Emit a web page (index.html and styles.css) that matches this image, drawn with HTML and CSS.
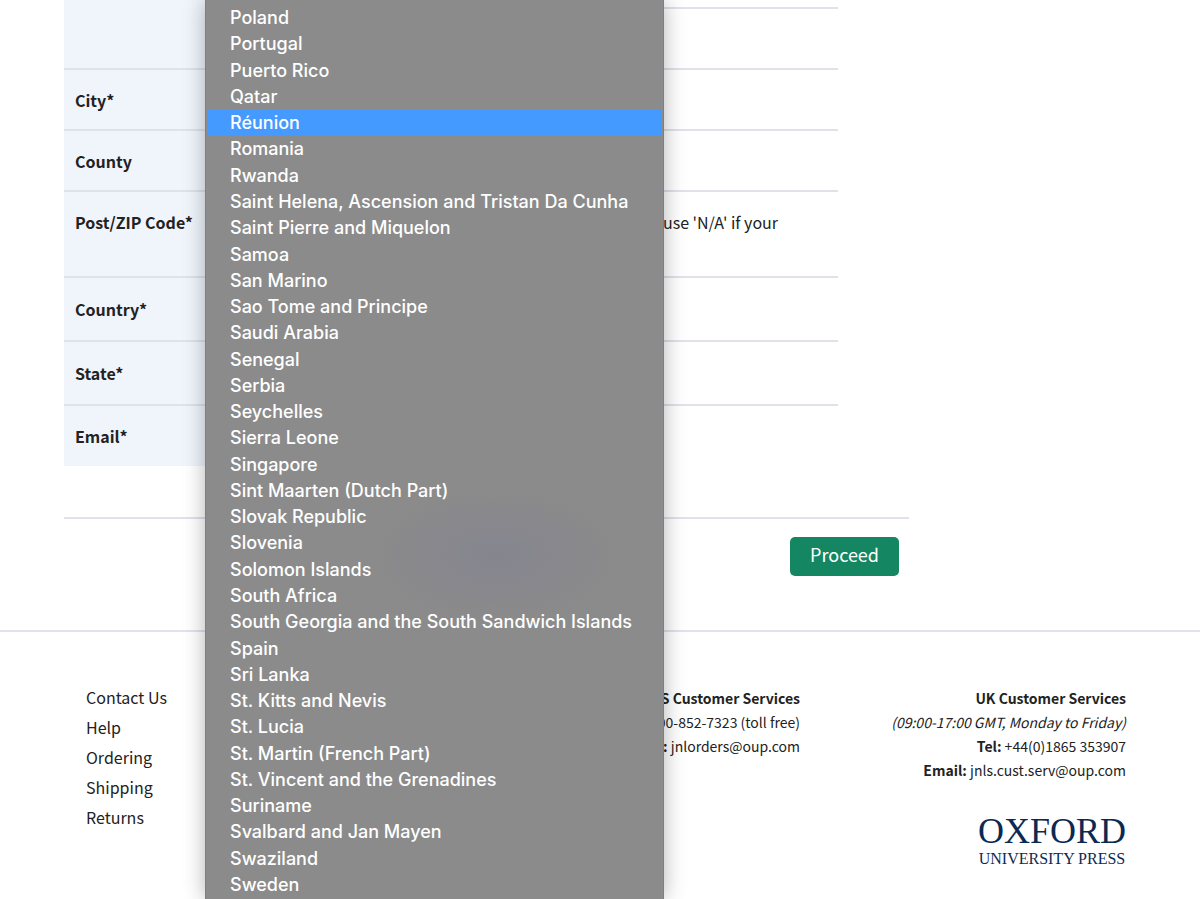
FILE: index.html
```
<!DOCTYPE html>
<html lang="en">
<head>
    <meta charset="UTF-8">
    <meta name="viewport" content="width=device-width, initial-scale=1.0">
    <title>Your details - Oxford University Press</title>
    <link rel="stylesheet" href="styles.css">
</head>
<body>
    <main>
        <form class="order-form">
            <table class="details">
                <tr class="row-first">
                    <th rowspan="2"></th>
                    <td></td>
                </tr>
                <tr>
                    <td><input type="text" aria-label="Address line 2"></td>
                </tr>
                <tr>
                    <th><label for="city">City*</label></th>
                    <td><input type="text" id="city"></td>
                </tr>
                <tr>
                    <th><label for="county">County</label></th>
                    <td><input type="text" id="county"></td>
                </tr>
                <tr class="row-postcode">
                    <th><label for="postcode">Post/ZIP Code*</label></th>
                    <td>
                        <div class="with-note">
                            <input type="text" id="postcode">
                            <span>Please use 'N/A' if your</span>
                        </div>
                    </td>
                </tr>
                <tr class="row-select">
                    <th><label for="country">Country*</label></th>
                    <td>
                        <select id="country">
                            <option>Réunion</option>
                        </select>
                    </td>
                </tr>
                <tr class="row-select">
                    <th><label for="state">State*</label></th>
                    <td><select id="state"></select></td>
                </tr>
                <tr>
                    <th><label for="email">Email*</label></th>
                    <td><input type="email" id="email"></td>
                </tr>
            </table>
            <div class="actions">
                <button type="button">Proceed</button>
            </div>
        </form>
    </main>

    <footer>
        <nav class="footer-links">
            <a href="#">Contact Us</a>
            <a href="#">Help</a>
            <a href="#">Ordering</a>
            <a href="#">Shipping</a>
            <a href="#">Returns</a>
        </nav>
        <div class="support">
            <strong>US Customer Services</strong>
            <span><strong>Tel:</strong> 1-800-852-7323 (toll free)</span>
            <span><strong>Email:</strong> jnlorders@oup.com</span>
        </div>
        <div class="support support-uk">
            <strong>UK Customer Services</strong>
            <em>(09:00-17:00 GMT, Monday to Friday)</em>
            <span><strong>Tel:</strong> +44(0)1865 353907</span>
            <span><strong>Email:</strong> jnls.cust.serv@oup.com</span>
            <div class="logo">
                <span class="logo-name">OXFORD</span>
                <span class="logo-sub">UNIVERSITY PRESS</span>
            </div>
        </div>
    </footer>

    <!-- open country list -->
    <ul class="country-menu" role="listbox" aria-label="Country">
        <li role="option">Poland</li>
        <li role="option">Portugal</li>
        <li role="option">Puerto Rico</li>
        <li role="option">Qatar</li>
        <li role="option" class="active" aria-selected="true">Réunion</li>
        <li role="option">Romania</li>
        <li role="option">Rwanda</li>
        <li role="option">Saint Helena, Ascension and Tristan Da Cunha</li>
        <li role="option">Saint Pierre and Miquelon</li>
        <li role="option">Samoa</li>
        <li role="option">San Marino</li>
        <li role="option">Sao Tome and Principe</li>
        <li role="option">Saudi Arabia</li>
        <li role="option">Senegal</li>
        <li role="option">Serbia</li>
        <li role="option">Seychelles</li>
        <li role="option">Sierra Leone</li>
        <li role="option">Singapore</li>
        <li role="option">Sint Maarten (Dutch Part)</li>
        <li role="option">Slovak Republic</li>
        <li role="option">Slovenia</li>
        <li role="option">Solomon Islands</li>
        <li role="option">South Africa</li>
        <li role="option">South Georgia and the South Sandwich Islands</li>
        <li role="option">Spain</li>
        <li role="option">Sri Lanka</li>
        <li role="option">St. Kitts and Nevis</li>
        <li role="option">St. Lucia</li>
        <li role="option">St. Martin (French Part)</li>
        <li role="option">St. Vincent and the Grenadines</li>
        <li role="option">Suriname</li>
        <li role="option">Svalbard and Jan Mayen</li>
        <li role="option">Swaziland</li>
        <li role="option">Sweden</li>
    </ul>
</body>
</html>
```
FILE: styles.css
```
* {
    box-sizing: border-box;
}
body {
    font-family: "Noto Sans CJK SC", "Noto Sans", sans-serif;
    font-size: 16px;
    line-height: 24px;
    margin: 0;
    background-color: #fff;
    color: #222;
}
main {
    padding: 0 64px;
    border-bottom: 2px solid #e0e2ee;
}
.order-form {
    max-width: 845px;
}
.details {
    width: 100%;
    max-width: 774px;
    border-collapse: collapse;
}
.details th {
    width: 160px;
    padding: 0 11px;
    background-color: #f0f5fc;
    text-align: left;
}
.details td {
    padding: 0 11px;
}
.details tr {
    height: 61px;
    border-bottom: 2px solid #dfe1eb;
}
.details tr:last-child {
    border-bottom: none;
}
.details .row-first {
    height: 8px;
}
.details .row-postcode {
    height: 86px;
}
.details .row-postcode th,
.details .row-postcode td {
    padding-top: 18px;
    vertical-align: top;
}
.details .row-select {
    height: 64px;
}
.details input,
.details select {
    width: 300px;
    height: 30px;
    padding: 0 8px;
    border: 1px solid #b4b8c8;
    border-radius: 4px;
    background-color: #fff;
    font: inherit;
}
.with-note {
    display: flex;
    justify-content: flex-end;
    gap: 8px;
    padding-right: 49px;
}
.actions {
    display: flex;
    justify-content: flex-end;
    margin-top: 51px;
    padding: 18px 10px 54px;
    border-top: 2px solid #dfe1eb;
}
.actions button {
    height: 39px;
    padding: 0 20px 5px;
    border: none;
    border-radius: 5px;
    background-color: #148762;
    color: #fff;
    font-family: inherit;
    font-size: 18px;
    cursor: pointer;
}
footer {
    display: flex;
    padding: 50px 74px 32px 86px;
}
.footer-links {
    display: flex;
    flex-direction: column;
    flex: 1;
    line-height: 30px;
}
.footer-links a {
    color: #222;
    text-decoration: none;
}
.support {
    display: flex;
    flex-direction: column;
    align-items: flex-end;
    padding-top: 4px;
    font-size: 14px;
    text-align: right;
}
.support-uk {
    width: 326px;
}
.logo {
    display: flex;
    flex-direction: column;
    align-items: center;
    margin-top: 30px;
    color: #0b2a52;
    font-family: "Liberation Serif", serif;
}
.logo-name {
    font-size: 36px;
    line-height: 38px;
}
.logo-sub {
    font-size: 16px;
    line-height: 18px;
}
.country-menu {
    position: absolute;
    top: 0;
    bottom: 0;
    left: 205px;
    display: flex;
    flex-direction: column;
    width: 459px;
    margin: 0;
    padding: 5px 1px 1px;
    border: solid #7f7f7f;
    border-width: 0 1px;
    background: #8b8b8b radial-gradient(ellipse 130px 70px at 290px 555px, #85858f, #8b8b8b);
    box-shadow: 0 0 20px rgba(0, 0, 0, 0.3);
    color: #fff;
    font-family: Inter, sans-serif;
    font-size: 18px;
    font-weight: 500;
    list-style: none;
}
.country-menu li {
    display: flex;
    flex: 1;
    align-items: center;
    padding-left: 23px;
    white-space: nowrap;
}
.country-menu .active {
    background-color: #459aff;
}
```
